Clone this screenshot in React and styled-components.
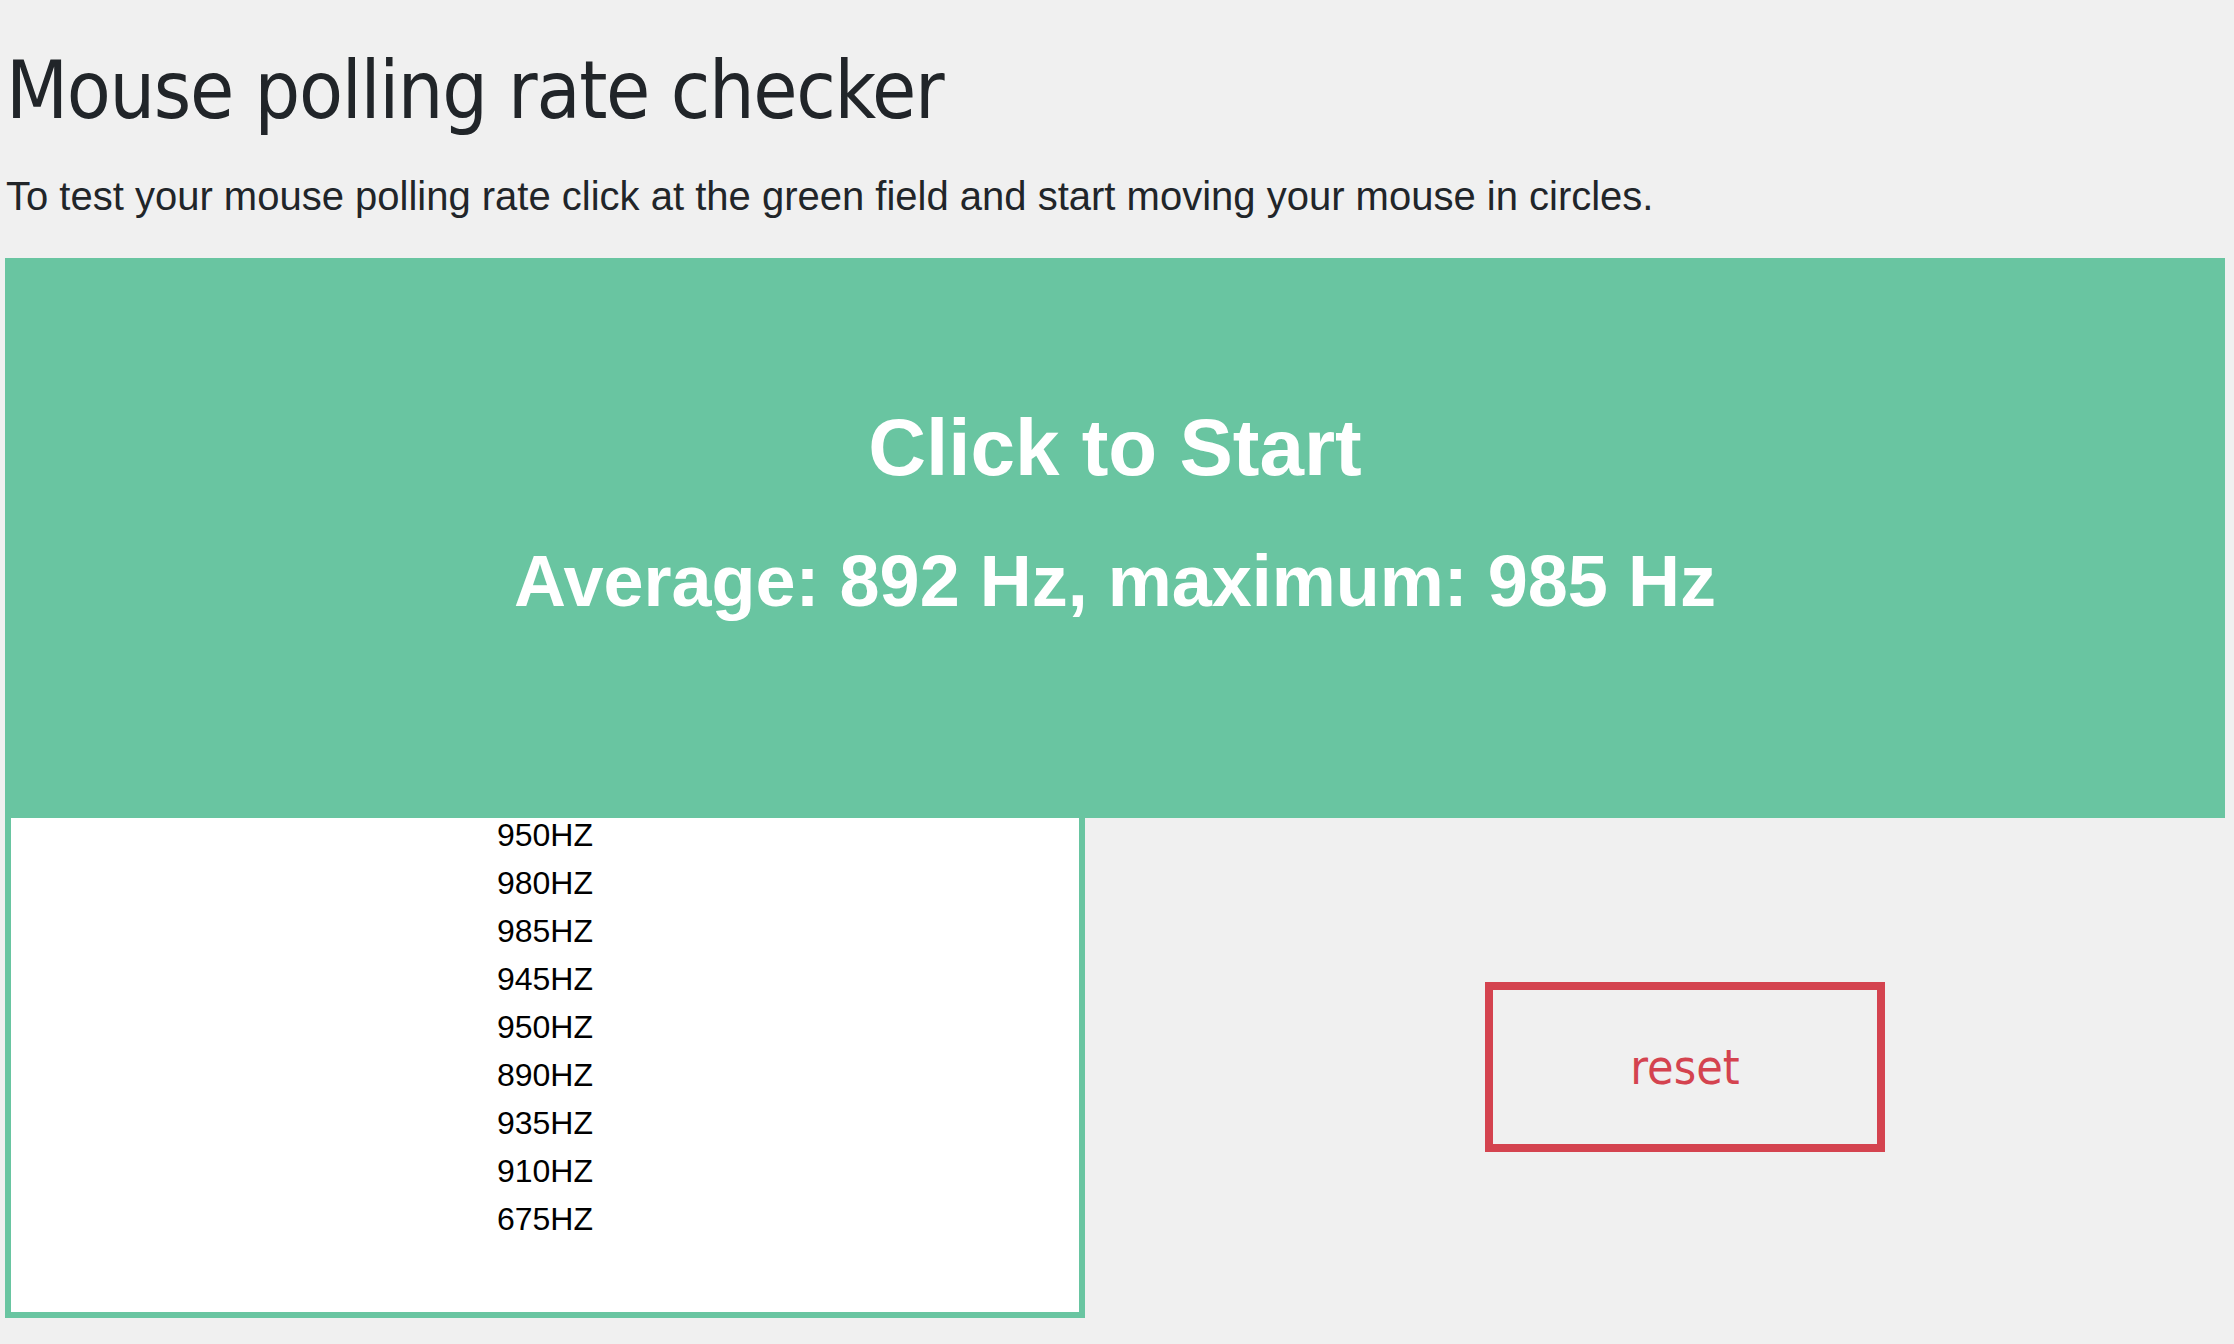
import React from "react";
import styled, { createGlobalStyle } from "styled-components";

const GlobalStyle = createGlobalStyle`
  html, body {
    margin: 0;
    padding: 0;
    background: #f0f0f0;
  }
  body {
    font-family: "Liberation Sans", Arial, sans-serif;
    color: #212529;
  }
  * { box-sizing: border-box; }
`;

const Page = styled.div`
  padding: 0 9px 0 5px;
  min-height: 100vh;
`;

const Title = styled.h1`
  margin: 43px 0 0 1px;
  font-family: "DejaVu Sans Condensed", "DejaVu Sans", sans-serif;
  font-stretch: condensed;
  font-weight: 400;
  font-size: 80px;
  line-height: 96px;
  letter-spacing: -1.3px;
  color: #212529;
`;

const Intro = styled.p`
  margin: 27px 0 0 1px;
  font-family: "Liberation Sans", Arial, sans-serif;
  font-size: 40px;
  line-height: 60px;
  color: #212529;
`;

const Field = styled.div`
  margin-top: 32px;
  height: 560px;
  background: #69c5a1;
  display: flex;
  flex-direction: column;
  align-items: center;
  padding-top: 142px;
  color: #ffffff;
  font-family: "Liberation Sans", Arial, sans-serif;
  font-weight: 700;
  cursor: pointer;
`;

const FieldHeading = styled.div`
  font-size: ${(p) => p.$size}px;
  line-height: ${(p) => p.$lh}px;
  margin-top: ${(p) => p.$mt || 0}px;
  white-space: nowrap;
`;

const Row = styled.div`
  display: grid;
  grid-template-columns: 1080px 1fr;
  height: 500px;
`;

const ListBox = styled.div`
  height: 500px;
  background: #ffffff;
  border: 6px solid #69c5a1;
  border-top: none;
  overflow: hidden;
`;

const ItemList = styled.ul`
  list-style: none;
  margin: -7px 0 0 0;
  padding: 0;
  text-align: center;
`;

const Item = styled.li`
  font-family: "Liberation Sans", Arial, sans-serif;
  font-size: 32px;
  line-height: 48px;
  color: #000000;
`;

const ResetArea = styled.div`
  display: flex;
  align-items: center;
  justify-content: center;
  padding-left: 60px;
  padding-bottom: 3px;
`;

const ResetButton = styled.button`
  width: 400px;
  height: 170px;
  background: transparent;
  border: 8px solid #d4434f;
  color: #d4434f;
  font-family: "DejaVu Sans Condensed", "DejaVu Sans", sans-serif;
  font-stretch: condensed;
  font-size: 48px;
  line-height: 1;
  padding: 0;
  cursor: pointer;
`;

const rates = [950, 980, 985, 945, 950, 890, 935, 910, 675];

export default function App() {
  return (
    <>
      <GlobalStyle />
      <Page>
        <Title>Mouse polling rate checker</Title>
        <Intro>
          To test your mouse polling rate click at the green field and start moving your mouse in circles.
        </Intro>
        <Field>
          <FieldHeading $size={80} $lh={96}>Click to Start</FieldHeading>
          <FieldHeading $size={72} $lh={86} $mt={42}>
            Average: 892 Hz, maximum: 985 Hz
          </FieldHeading>
        </Field>
        <Row>
          <ListBox>
            <ItemList>
              {rates.map((r, i) => (
                <Item key={i}>{r}HZ</Item>
              ))}
            </ItemList>
          </ListBox>
          <ResetArea>
            <ResetButton>reset</ResetButton>
          </ResetArea>
        </Row>
      </Page>
    </>
  );
}
